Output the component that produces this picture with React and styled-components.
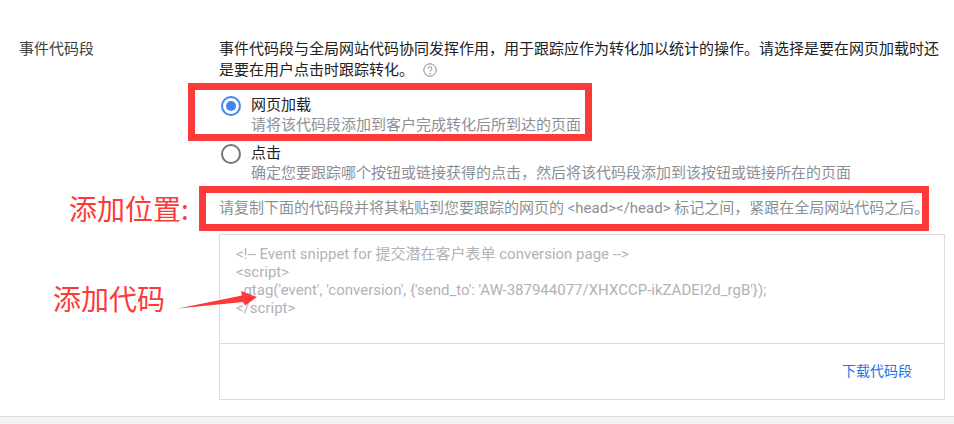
import React from "react";
import styled, { createGlobalStyle } from "styled-components";

const Global = createGlobalStyle`
  html, body { margin: 0; padding: 0; background: #fff; }
  body { font-family: Roboto, "Noto Sans CJK SC", sans-serif; }
`;

const Page = styled.div`
  position: relative;
  width: 954px;
  height: 424px;
  overflow: hidden;
  display: flex;
  flex-direction: column;
  background: #fff;
`;

const Section = styled.section`
  flex: 1;
  display: grid;
  grid-template-columns: 200px 726px;
  padding: 39px 0 0 19px;
  font-size: 15px;
  line-height: 21px;
  color: #202124;
`;

const FieldLabel = styled.div`
  color: #3c4043;
`;

const Content = styled.div`
  display: flex;
  flex-direction: column;
`;

const Intro = styled.p`
  margin: 0;
  width: 726px;
`;

const HelpIcon = styled.svg`
  width: 14px;
  height: 14px;
  margin-left: 9px;
  vertical-align: -2px;
`;

const Options = styled.div`
  display: flex;
  flex-direction: column;
  gap: 8px;
  margin-top: 14px;
`;

const Option = styled.div`
  display: flex;
  gap: 10px;
  line-height: 20px;
`;

const Radio = styled.span`
  box-sizing: border-box;
  flex: none;
  width: 20px;
  height: 20px;
  margin: 1px 0 0 2px;
  border-radius: 50%;
  border: 2px solid ${(p) => (p.$on ? "#4285f4" : "#757575")};
  display: flex;
  align-items: center;
  justify-content: center;
  &::after {
    content: "";
    width: 10px;
    height: 10px;
    border-radius: 50%;
    background: ${(p) => (p.$on ? "#4285f4" : "transparent")};
  }
`;

const OptionText = styled.div`
  display: flex;
  flex-direction: column;
`;

const OptionTitle = styled.div`
  color: #202124;
`;

const Muted = styled.div`
  color: #8c9095;
`;

const Instruction = styled(Muted)`
  margin-top: 15px;
  white-space: nowrap;
`;

const CodeCard = styled.div`
  box-sizing: border-box;
  width: 726px;
  height: 166px;
  margin-top: 15px;
  border: 1px solid #dadce0;
  display: flex;
  flex-direction: column;
`;

const CodeArea = styled.pre`
  box-sizing: border-box;
  height: 109px;
  margin: 0;
  padding: 10px 16px;
  border-bottom: 1px solid #dadce0;
  font-family: Roboto, "Noto Sans CJK SC", sans-serif;
  font-size: 15px;
  line-height: 18px;
  color: #b0b3b7;
`;

const CardFooter = styled.div`
  flex: 1;
  display: flex;
  justify-content: flex-end;
  align-items: center;
  padding-right: 32px;
`;

const DownloadLink = styled.a`
  font-size: 14px;
  color: #1a73e8;
`;

const BottomBar = styled.div`
  flex: none;
  box-sizing: border-box;
  height: 8px;
  background: #f1f3f4;
  border-top: 1px solid #dadce0;
`;

const RedBox = styled.div`
  position: absolute;
  box-sizing: border-box;
  left: ${(p) => p.$x}px;
  top: ${(p) => p.$y}px;
  width: ${(p) => p.$w}px;
  height: ${(p) => p.$h}px;
  border: 7px solid #fd3a3a;
`;

const Annotation = styled.div`
  position: absolute;
  left: ${(p) => p.$x}px;
  top: ${(p) => p.$y}px;
  font-size: 28px;
  line-height: 1;
  color: #fd3a3a;
  white-space: nowrap;
  font-family: "Noto Sans CJK SC", sans-serif;
`;

const Arrow = styled.svg`
  position: absolute;
  left: 176px;
  top: 286px;
  width: 84px;
  height: 28px;
`;

export default function App() {
  return (
    <Page>
      <Global />
      <Section>
        <FieldLabel>事件代码段</FieldLabel>
        <Content>
          <Intro>
            事件代码段与全局网站代码协同发挥作用，用于跟踪应作为转化加以统计的操作。请选择是要在网页加载时还是要在用户点击时跟踪转化。
            <HelpIcon viewBox="0 0 14 14" fill="none">
              <circle cx="7" cy="7" r="6.2" stroke="#80868b" strokeWidth="1" />
              <path d="M5.1 5.6a1.9 1.9 0 1 1 2.8 1.6c-.6.4-.9.7-.9 1.4" stroke="#80868b" strokeWidth="1" />
              <circle cx="7" cy="10.4" r=".7" fill="#80868b" />
            </HelpIcon>
          </Intro>
          <Options>
            <Option>
              <Radio $on />
              <OptionText>
                <OptionTitle>网页加载</OptionTitle>
                <Muted>请将该代码段添加到客户完成转化后所到达的页面</Muted>
              </OptionText>
            </Option>
            <Option>
              <Radio />
              <OptionText>
                <OptionTitle>点击</OptionTitle>
                <Muted>确定您要跟踪哪个按钮或链接获得的点击，然后将该代码段添加到该按钮或链接所在的页面</Muted>
              </OptionText>
            </Option>
          </Options>
          <Instruction>
            请复制下面的代码段并将其粘贴到您要跟踪的网页的 &lt;head&gt;&lt;/head&gt; 标记之间，紧跟在全局网站代码之后。
          </Instruction>
          <CodeCard>
            <CodeArea>{`<!-- Event snippet for 提交潜在客户表单 conversion page -->
<script>
  gtag('event', 'conversion', {'send_to': 'AW-387944077/XHXCCP-ikZADEI2d_rgB'});
</script>`}</CodeArea>
            <CardFooter>
              <DownloadLink>下载代码段</DownloadLink>
            </CardFooter>
          </CodeCard>
        </Content>
      </Section>
      <BottomBar />
      <RedBox $x={188} $y={83} $w={404} $h={58} />
      <RedBox $x={199} $y={186} $w={730} $h={45} />
      <Annotation $x={69} $y={194}>添加位置:</Annotation>
      <Annotation $x={53} $y={284}>添加代码</Annotation>
      <Arrow viewBox="0 0 84 28">
        <path d="M2 22.5 L66 9.5 L65 5 L81 11 L69 19.5 L67 16 Z" fill="#fd3a3a" />
      </Arrow>
    </Page>
  );
}
